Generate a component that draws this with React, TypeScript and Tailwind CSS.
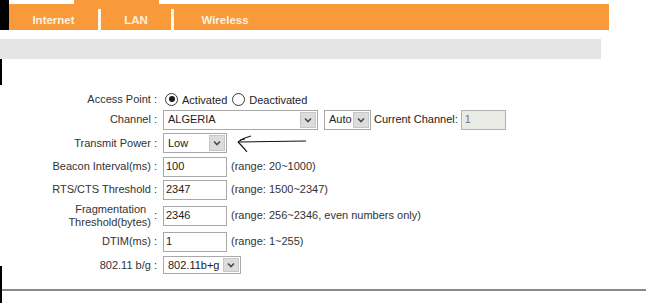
import React from "react";

const Arrow = () => (
  <div className="m-[1px] flex w-[16px] items-center justify-center border border-[#c6c6c6] bg-[#dcdcdc]">
    <svg width="8" height="6" viewBox="0 0 8 6">
      <path d="M1 1.5 L4 4.5 L7 1.5" fill="none" stroke="#4b4b4b" strokeWidth="1.6" />
    </svg>
  </div>
);

const Select = ({ value, className }: { value: string; className: string }) => (
  <div className={"flex items-stretch border border-[#a9a9a9] bg-white " + className}>
    <div className="flex flex-1 items-center pl-[4px] text-[11px] text-[#222]">{value}</div>
    <Arrow />
  </div>
);

const Input = ({ value, className }: { value: string; className: string }) => (
  <div className={"flex items-center border border-[#a9a9a9] bg-white pl-[2px] text-[11px] text-[#222] " + className}>
    {value}
  </div>
);

const Radio = ({ checked }: { checked?: boolean }) => (
  <div className="flex h-[13px] w-[13px] items-center justify-center rounded-full border border-[#3a3a3a] bg-white">
    {checked && <div className="h-[6px] w-[6px] rounded-full bg-[#1a1a1a]" />}
  </div>
);

const Row = ({ label, className, children }: { label: React.ReactNode; className: string; children: React.ReactNode }) => (
  <div className={"flex items-center " + className}>
    <div className="w-[156px] pr-[1px] text-right text-[11px] text-[#333]">{label}</div>
    <div className="ml-[5px] flex items-center">{children}</div>
  </div>
);

export default function App() {
  return (
    <div className="h-[303px] w-[646px] overflow-hidden bg-white font-[Liberation_Sans,Arial,sans-serif]">
      {/* top nav */}
      <div className="flex h-[30px]">
        <div className="w-[9px] bg-black" />
        <div className="flex w-[600px] flex-col">
          <div className="flex h-[4px]">
            <div className="w-[65px] bg-white" />
            <div className="w-[85px] bg-[#f89a3a]" />
            <div className="flex-1 bg-white" />
          </div>
          <div className="flex h-[26px] bg-[#f89a3a] text-[11.5px] font-bold text-[#fdf0e0]">
            <div className="flex w-[89px] items-center justify-center pt-[7px]">Internet</div>
            <div className="mt-[5px] w-[3px] bg-[#fdf6ea]" />
            <div className="flex w-[70px] items-center justify-center pt-[7px]">LAN</div>
            <div className="mt-[5px] w-[3px] bg-[#fdf6ea]" />
            <div className="flex w-[102px] items-center justify-center pt-[7px]">Wireless</div>
          </div>
        </div>
      </div>

      {/* gray bar */}
      <div className="mt-[9px] h-[20px] w-[601px] bg-[#e5e5e5]" />

      {/* content */}
      <div className="flex h-[244px]">
        <div className="flex w-[2px] flex-col">
          <div className="h-[26px] bg-black" />
          <div className="flex-1" />
          <div className="h-[37px] bg-black" />
        </div>
        <div className="flex flex-1 flex-col pt-[31px]">
          <Row label="Access Point :" className="h-[18px]">
            <div className="ml-[2px]"><Radio checked /></div>
            <span className="ml-[4px] mt-[3px] text-[11px] text-[#222]">Activated</span>
            <div className="ml-[5px]"><Radio /></div>
            <span className="ml-[4px] mt-[3px] text-[11px] text-[#222]">Deactivated</span>
          </Row>
          <Row label="Channel :" className="h-[23px]">
            <Select value="ALGERIA" className="h-[20px] w-[155px]" />
            <Select value="Auto" className="ml-[6px] h-[20px] w-[47px]" />
            <span className="ml-[3px] text-[11px] text-[#222]">Current Channel:</span>
            <div className="ml-[3px] flex h-[20px] w-[45px] items-center border border-[#b2b2b2] bg-[#ebebe6] pl-[3px] text-[11px] text-[#777]">1</div>
          </Row>
          <Row label="Transmit Power :" className="h-[24px]">
            <Select value="Low" className="h-[20px] w-[64px]" />
            <svg className="ml-[9px]" width="72" height="20" viewBox="0 0 72 20">
              <path d="M2 9 L70 8" fill="none" stroke="#111" strokeWidth="1.1" />
              <path d="M2 9 C6 6 10 4 15 3" fill="none" stroke="#111" strokeWidth="1.1" />
              <path d="M4 7 L9 6" fill="none" stroke="#111" strokeWidth="1" />
              <path d="M2 9 C5 12 8 15 11 19" fill="none" stroke="#111" strokeWidth="1.1" />
            </svg>
          </Row>
          <Row label="Beacon Interval(ms) :" className="h-[23px]">
            <Input value="100" className="h-[20px] w-[64px]" />
            <span className="ml-[4px] text-[11px] text-[#333]">(range: 20~1000)</span>
          </Row>
          <Row label="RTS/CTS Threshold :" className="h-[23px]">
            <Input value="2347" className="h-[20px] w-[64px]" />
            <span className="ml-[4px] text-[11px] text-[#333]">(range: 1500~2347)</span>
          </Row>
          <Row
            label={
              <div className="flex items-center justify-end">
                <div className="text-center leading-[13px]">
                  <div className="pl-[2px]">Fragmentation</div>
                  <div>Threshold(bytes)</div>
                </div>
                <span className="ml-[3px]">:</span>
              </div>
            }
            className="h-[29px]"
          >
            <Input value="2346" className="h-[20px] w-[64px]" />
            <span className="ml-[4px] text-[11px] text-[#333]">(range: 256~2346, even numbers only)</span>
          </Row>
          <Row label="DTIM(ms) :" className="h-[23px]">
            <Input value="1" className="h-[20px] w-[64px]" />
            <span className="ml-[4px] text-[11px] text-[#333]">(range: 1~255)</span>
          </Row>
          <Row label="802.11 b/g :" className="h-[24px]">
            <Select value="802.11b+g" className="h-[18px] w-[78px]" />
          </Row>
          <div className="mt-[12px] h-[2px] bg-[#8a8a8a]" />
        </div>
      </div>
    </div>
  );
}
